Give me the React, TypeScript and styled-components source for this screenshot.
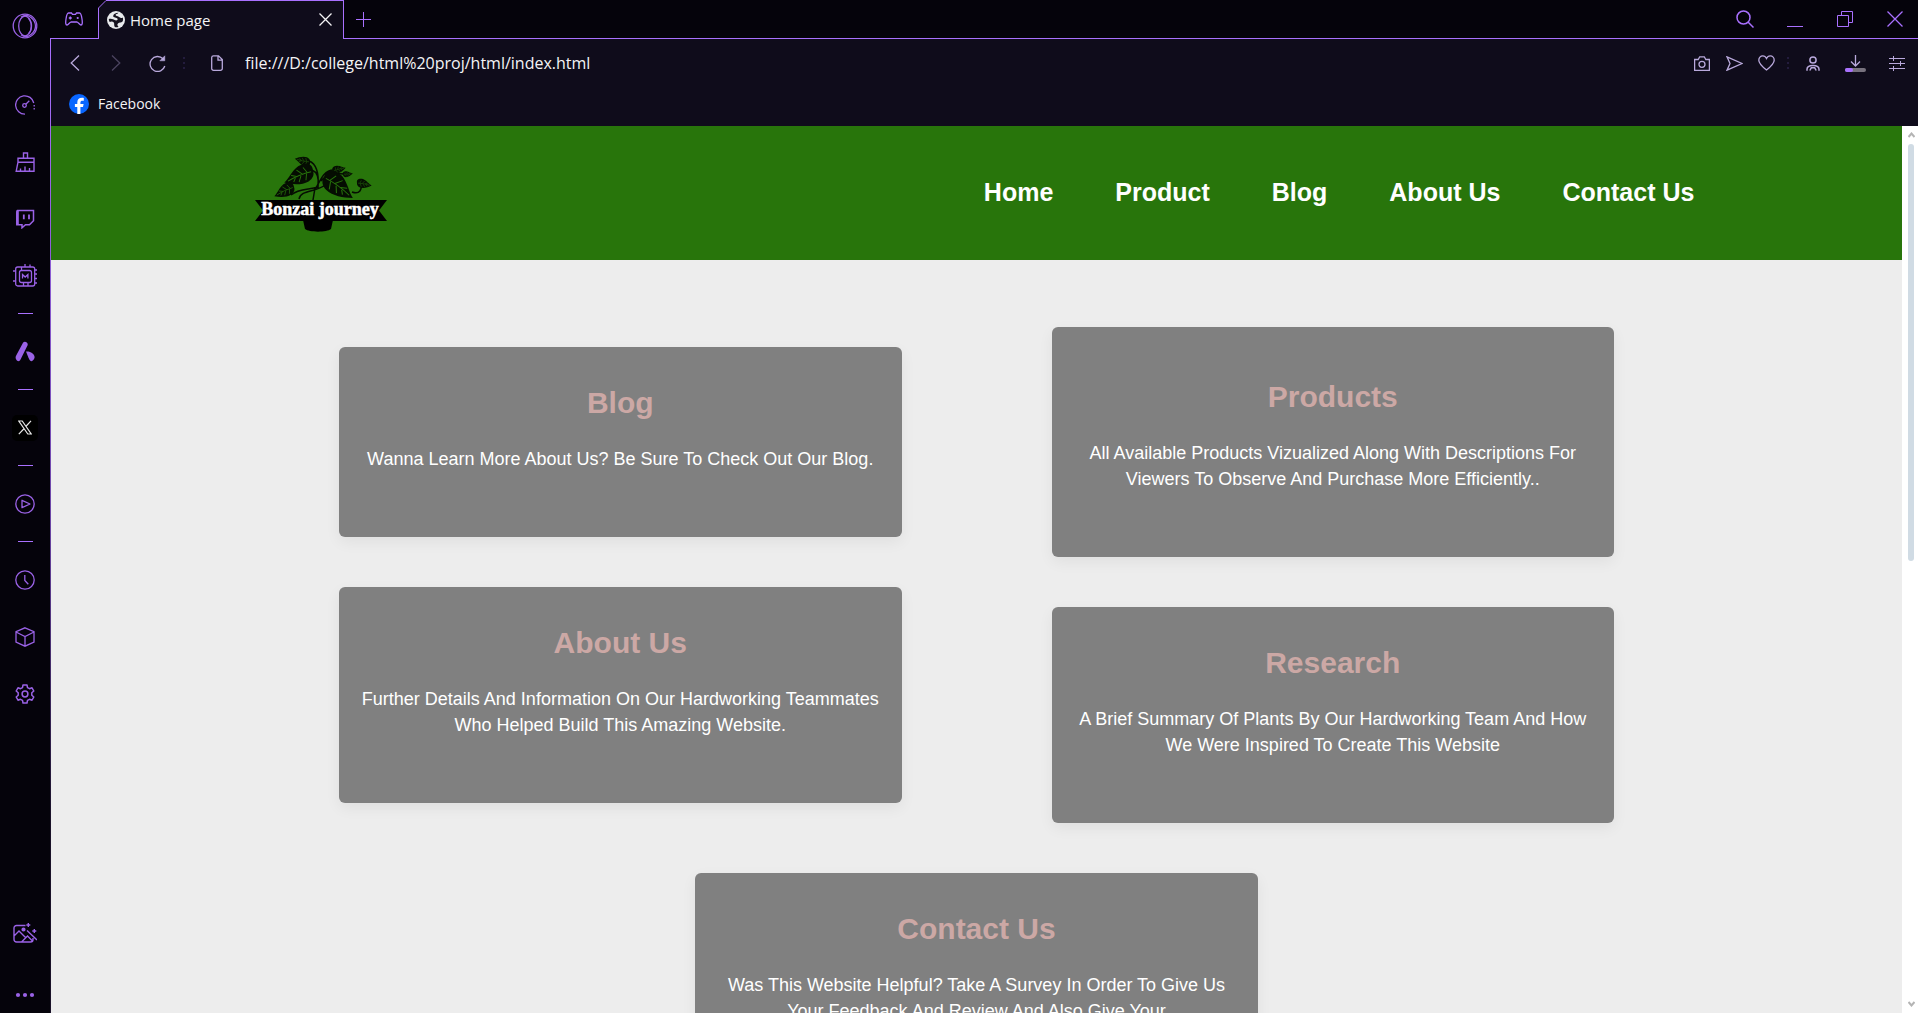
import React from "react";
import styled, { createGlobalStyle } from "styled-components";

const c = {
  frame: "#05030b",
  panel: "#0f0c1b",
  accent: "#a970ff",
  accentDim: "#9a62e6",
  tool: "#b9a9dc",
  green: "#28750b",
};
const uiFont = `"Open Sans", "Noto Sans", sans-serif`;
const pageFont = `"Liberation Sans", Arial, sans-serif`;

const Global = createGlobalStyle`
  *, *::before, *::after { box-sizing: border-box; }
  html, body { margin: 0; background: ${c.frame}; overflow: hidden; }
  button { border: 0; background: none; padding: 0; color: inherit; font: inherit; cursor: pointer; }
  svg { display: block; }
`;

const Shell = styled.div`
  display: flex;
  height: 100vh;
  background: ${c.frame};
  font-family: ${uiFont};
`;
const Sidebar = styled.nav`
  flex: none;
  width: 50px;
  display: flex;
  flex-direction: column;
  align-items: center;
  color: ${c.accentDim};
`;
const SideButton = styled.button<{ $h?: number }>`
  flex: none;
  width: 50px;
  height: ${(p) => p.$h ?? 57}px;
  display: grid;
  place-items: center;
`;
const SideGroup = styled.div`
  flex: 1;
  padding-top: 25px;
`;
const SideDivider = styled.div`
  height: 19px;
  display: grid;
  place-items: center;
  &::before {
    content: "";
    width: 15px;
    height: 1px;
    background: ${c.accent};
  }
`;
const XTile = styled.span`
  width: 26px;
  height: 26px;
  border-radius: 5px;
  display: grid;
  place-items: center;
  background: #000;
  color: #e8e8e8;
`;

const Main = styled.div`
  flex: 1;
  min-width: 0;
  display: flex;
  flex-direction: column;
`;
const TabStrip = styled.div`
  flex: none;
  display: flex;
  height: 39px;
  color: ${c.accent};
`;
const GameCorner = styled.div`
  width: 48px;
  display: grid;
  place-items: center;
  border-bottom: 1px solid ${c.accent};
`;
const Tab = styled.div`
  position: relative;
  width: 246px;
  display: flex;
  align-items: center;
  gap: 5px;
  padding: 0 8px 1px;
  background: ${c.panel};
  border: 1px solid ${c.accent};
  border-bottom: 0;
  color: #f4f4f6;
  font-size: 15px;
  line-height: 20px;
`;
const Chamfer = styled.svg`
  position: absolute;
  left: -1px;
  top: -1px;
`;
const TabTitle = styled.span`
  flex: 1;
`;
const TabClose = styled.button`
  width: 20px;
  height: 20px;
  display: grid;
  place-items: center;
`;
const StripRest = styled.div`
  flex: 1;
  display: flex;
  justify-content: space-between;
  border-bottom: 1px solid ${c.accent};
  margin-left: -1px;
`;
const WindowControls = styled.div`
  display: flex;
  gap: 4px;
`;
const StripButton = styled.button<{ $w?: number }>`
  width: ${(p) => p.$w ?? 46}px;
  display: grid;
  place-items: center;
`;

const Body = styled.div`
  flex: 1;
  min-height: 0;
  display: flex;
  flex-direction: column;
  border-left: 1px solid transparent;
  border-image: linear-gradient(${c.accent}, #6b45a5 50%, #1a1229 80%) 1;
  border-width: 0 0 0 1px;
`;
const Toolbar = styled.div`
  flex: none;
  height: 48px;
  display: flex;
  align-items: center;
  padding: 0 5px 0 3px;
  background: ${c.panel};
  color: ${c.tool};
`;
const ToolButton = styled.button<{ $w?: number; $dim?: boolean }>`
  flex: none;
  width: ${(p) => p.$w ?? 32}px;
  height: 32px;
  display: grid;
  place-items: center;
  opacity: ${(p) => (p.$dim ? 0.35 : 1)};
`;
const ToolGroup = styled.div<{ $gap?: number }>`
  display: flex;
  gap: ${(p) => p.$gap ?? 0}px;
`;
const Dots = styled.div`
  flex: none;
  display: grid;
  gap: 3px;
  margin: 0 8px 0 5px;
  & > i {
    width: 2px;
    height: 2px;
    background: #231c3d;
  }
`;
const Address = styled.input`
  flex: 1;
  min-width: 0;
  border: 0;
  outline: 0;
  background: none;
  padding: 0 0 0 4px;
  color: #f4f4f6;
  font: 16px/20px ${uiFont};
`;
const Bookmarks = styled.div`
  flex: none;
  height: 39px;
  padding: 7px 18px 0;
  background: ${c.panel};
`;
const Bookmark = styled.a`
  display: inline-flex;
  align-items: center;
  gap: 9px;
  color: #f4f4f6;
  font-size: 14px;
  line-height: 20px;
  text-decoration: none;
`;

const Viewport = styled.div`
  flex: 1;
  min-height: 0;
  display: flex;
`;
const Page = styled.div`
  flex: 1;
  min-width: 0;
  overflow: hidden;
  background: #ededed;
  font-family: ${pageFont};
`;
const Header = styled.header`
  height: 134px;
  padding: 0 11% 2px;
  display: flex;
  align-items: center;
  justify-content: space-between;
  background: ${c.green};
`;
const Links = styled.nav`
  display: flex;
  gap: 62px;
  padding-right: 4px;
`;
const NavLink = styled.a`
  color: #fff;
  font-size: 25px;
  line-height: 30px;
  font-weight: 700;
  text-decoration: none;
  white-space: nowrap;
`;
const Cards = styled.main`
  max-width: 1275px;
  margin: 0 auto;
  padding: 67px 0 50px;
  display: grid;
  grid-template-columns: 1fr 1fr;
  column-gap: 150px;
  row-gap: 50px;
  align-items: center;
`;
const Column = styled.div`
  display: grid;
  gap: 50px;
`;
const LastRow = styled.div`
  grid-column: 1 / -1;
  justify-self: center;
  width: calc(50% - 75px);
`;
const Card = styled.section<{ $tall?: boolean }>`
  padding: ${(p) => (p.$tall ? 52 : 38)}px 20px 65px;
  border-radius: 6px;
  background: #808080;
  box-shadow: 0 5px 15px rgba(0, 0, 0, 0.06);
  text-align: center;
`;
const CardTitle = styled.h2`
  margin: 0 0 25px;
  color: #cca8a5;
  font-size: 30px;
  line-height: 36px;
`;
const CardText = styled.p`
  margin: 0;
  color: #fff;
  font-size: 18px;
  line-height: 26px;
`;

const ScrollTrack = styled.div`
  flex: none;
  width: 16px;
  display: flex;
  flex-direction: column;
  align-items: center;
  background: #fff;
  color: #b4b4b4;
`;
const ScrollArrow = styled.button`
  width: 16px;
  height: 18px;
  display: grid;
  place-items: center;
  padding-left: 2px;
`;
const ScrollRail = styled.div`
  flex: 1;
  padding-left: 2px;
`;
const ScrollThumb = styled.div`
  width: 6px;
  height: 49%;
  border-radius: 3px;
  background: #d0dbe4;
`;

type IconProps = { w: number; h?: number; sw?: number; children: React.ReactNode };
const Icon = ({ w, h = w, sw = 1.3, children }: IconProps) => (
  <svg width={w} height={h} viewBox={`0 0 ${w} ${h}`} fill="none" stroke="currentColor" strokeWidth={sw} aria-hidden="true">
    {children}
  </svg>
);

const OperaIcon = () => (
  <Icon w={26}>
    <circle cx="13" cy="13" r="11.8" />
    <ellipse cx="13" cy="13" rx="6.3" ry="9.8" />
    <path d="M9 4.3C12 1.8 16 2 19 4.5c6 4.800 6 12.200 0 17-3 2.500-7 2.700-10 .2M16.500 5.500c4 3.500 4 11.500 0 15" />
  </Icon>
);
const GaugeIcon = () => (
  <Icon w={20}>
    <path d="M10 19.2A9.200 9.200 0 1 1 18.800 8" />
    <path d="M19.200 10v6" strokeDasharray="1.500 1.500" />
    <circle cx="9.500" cy="10.500" r="1.800" />
    <path d="m10.800 9.200 3.500-3.400" />
  </Icon>
);
const BroomIcon = () => (
  <Icon w={20} sw={1.4}>
    <path d="M8.500 6V1h4v5M3 6.200h16v4H3zM3 10.200 1.200 19.200H19v-9M5.500 19v-2.500M10 19v-4.500M14.500 19v-3" />
  </Icon>
);
const TwitchIcon = () => (
  <Icon w={20} sw={1.5}>
    <path d="M2.500 1.500h16v10.300l-4 4h-4L7 18.800v-3H1.800V4z" />
    <path d="M2.500 1.500v14" strokeWidth="2.600" />
    <path d="M8.800 5.500v4.700M14 5.500v4.700" strokeWidth="1.800" />
  </Icon>
);
const ChipIcon = () => (
  <Icon w={24} sw={1.3}>
    <rect x="2.700" y="3" width="19" height="19" rx="2" />
    <rect x="6.500" y="6.500" width="12" height="12" rx="2" />
    <path d="M9.500 14.500v-4l2.700 2.500 2.700-2.500v4M8.500 3v3M12 3V0M17 3V.5M21.700 6H24M21.700 10H24M21.700 14.500H24M21.700 19H24M2.700 7H0M2.700 17H0M10.500 18.500V22M15 18.500V22" />
  </Icon>
);
const AriaIcon = () => (
  <svg width="20" height="21" viewBox="0 0 20 21" fill="currentColor" aria-hidden="true">
    <path d="M8 1.800C9.200-.3 13.500 1 12.600 4.300L5.800 18c-1.300 2.900-3.400 2.600-4.600.6C.3 17 .5 15.800 1.200 14.500z" />
    <path d="M11 10.500c4.200-.6 8.400 2.200 8.600 5.600 0 1.500-1.300 3.900-3 4.100-1.400 0-2.200-1.500-3-3.200z" />
  </svg>
);
const XIcon = () => (
  <Icon w={14} h={15} sw={1.2}>
    <path d="M.8 1h3.400l9 13H9.800zM13 .8 7.800 6.500M6.200 8.500.8 14.200" />
  </Icon>
);
const PlayIcon = () => (
  <Icon w={20}>
    <circle cx="10" cy="10" r="9.200" />
    <path d="M7 6.300v7.400L15 10z" strokeLinejoin="round" />
  </Icon>
);
const ClockIcon = () => (
  <Icon w={20}>
    <circle cx="10" cy="10" r="9.200" />
    <path d="M9.800 5v5.500l3.500 3.800" />
  </Icon>
);
const CubeIcon = () => (
  <Icon w={20}>
    <path d="m10 .8 9 3.800v10.600L10 19.200 1 15.200V4.600zM1 5l9 4.500L19 5M10 9.500v9.700" />
  </Icon>
);
const GearIcon = () => (
  <Icon w={20} sw={1.5}>
    <path d="m8 1-.5 2.600-2 1.100L3 3.800 1.200 7l2 1.800v2.400l-2 1.800L3 16.200l2.500-.9 2 1.100L8 19h4l.5-2.600 2-1.100 2.500.9 1.800-3.200-2-1.800V8.800l2-1.800L17 3.800l-2.500.9-2-1.100L12 1z" strokeLinejoin="round" />
    <circle cx="10" cy="10" r="2.900" />
  </Icon>
);
const PictureIcon = () => (
  <Icon w={24} h={20} sw={1.4}>
    <path d="M12.500 2.500H3.500a2.500 2.500 0 0 0-2.500 2.500v11.500A2.500 2.500 0 0 0 3.500 19h14a2.500 2.500 0 0 0 2.500-2.500V15M1 13l5-5 6.500 6.500M8.500 19l6-6 5.500 5.500M14 7.500l10 9.500M15.300 0v4M13.300 2h4M21.300 6v4M19.300 8h4" />
    <circle cx="10.500" cy="6.500" r="1.400" fill="currentColor" />
  </Icon>
);
const MoreIcon = () => (
  <svg width="20" height="6" viewBox="0 0 20 6" fill="currentColor" aria-hidden="true">
    <circle cx="3" cy="3" r="2.100" />
    <circle cx="10" cy="3" r="2.100" />
    <circle cx="17" cy="3" r="2.100" />
  </svg>
);
const GamepadIcon = () => (
  <Icon w={18} h={14}>
    <path d="M3.500 1h3l1 1.300h3L11.500 1h3c1.500 0 2 2.500 2.500 6 .5 3.500.5 6-1 6-1.300 0-2.500-2.500-4-3H6c-1.500.5-2.700 3-4 3-1.500 0-1.500-2.500-1-6 .5-3.500 1-6 2.500-6z" />
    <path d="M5.300 4.500v3M3.800 6h3" />
    <circle cx="12.700" cy="6" r="1.100" fill="currentColor" stroke="none" />
  </Icon>
);
const GlobeIcon = () => (
  <svg width="18" height="18" viewBox="0 0 18 18" aria-hidden="true">
    <circle cx="9" cy="9" r="9" fill="#e8eaed" />
    <path d="M11.500 1.800C8.500 2 6.200 3.200 6.200 5c0 2 3.500 1.300 4.300 2.800.6 1.300-1 2-2.300 1.500C6.500 8.500 4.500 7 1.800 8c0 1.300.5 2.400 1 3 1.500-.9 3-.6 4 .6.900 1.200-.2 2.500 1 4.500 2 .4 2.700.1 3.700-.4-1-1.200-1.700-2.300-.5-3.300 1.500-1.200 4-.3 4.900-2.600.3-1 .3-2-.1-3.300-1.200.8-2.300.7-3.300-.2-1.500-1.500-3.700-1-3.900-2.300-.1-1 2.200-1 2.900-2.200z" fill="#16131f" />
  </svg>
);
const CloseIcon = ({ s }: { s: number }) => (
  <Icon w={s}>
    <path d={`M.5.5l${s - 1} ${s - 1}M${s - 0.5}.5L.5 ${s - 0.5}`} />
  </Icon>
);
const FacebookIcon = () => (
  <svg width="20" height="20" viewBox="0 0 20 20" aria-hidden="true">
    <circle cx="10" cy="10" r="10" fill="#0866ff" />
    <path d="M8.300 20v-6.900H5.900V10h2.400V8.600c0-3.400 1.500-4.900 4.800-4.900.6 0 1.300.1 1.700.2v2.800h-1.200c-1.600 0-2.200.6-2.200 2.200V10h3.200l-.6 3.100h-2.600V20z" fill="#fff" />
  </svg>
);

const Leaf = ({ x, y, r, s, flip }: { x: number; y: number; r: number; s: number; flip?: boolean }) => (
  <g transform={`translate(${x} ${y}) rotate(${r}) scale(${s} ${flip ? -s : s})`}>
    <path d="M0 0C-3-8 4-11 12-10 20-8 25-2 31 0 24 5 16 9 8 8 3 7 0 4 0 0z" fill="#050d02" />
    <path d="M2 0Q14-2 27 0M6-1 8-7M11-1l4-6M17-1l5-3M7 0l3 6M13 0l4 5M19 0l3 3" fill="none" stroke={c.green} strokeWidth="0.9" />
  </g>
);
const LogoText = styled.text`
  font: 700 18px "Liberation Serif", "Times New Roman", serif;
  fill: #fff;
  stroke: #fff;
  stroke-width: 0.5px;
`;
const Logo = () => (
  <svg width="132" height="80" viewBox="0 0 132 80" role="img" aria-label="Bonzai journey">
    <g fill="none" stroke="#050d02" strokeWidth="1.500">
      <path d="M63 36C64 24 62 12 54 9M57 18c5 2 7 8 6 16M60 38C66 26 70 17 80 18M66 29c8-9 16-8 24-7M60 36l-2 12M44 47c2-10 18-6 29-16M36 43c8-7 18-5 27-8M97 40c8 3 10-3 9-8" />
    </g>
    <Leaf x={55} y={10} r={192} s={0.5} />
    <Leaf x={58} y={19} r={158} s={1} flip />
    <Leaf x={39} y={35} r={155} s={0.7} flip />
    <Leaf x={69} y={25} r={36} s={1.15} />
    <Leaf x={78} y={19} r={-14} s={0.42} />
    <Leaf x={88} y={23} r={-8} s={0.32} />
    <Leaf x={102} y={31} r={10} s={0.48} />
    <path d="M0 48h132l-8 10.500 8 10.500H0l8-10.500zM48 68h30l-2 9c-4 3.500-22 3.500-26 0z" fill="#000" />
    <LogoText x="65" y="63" textAnchor="middle">Bonzai journey</LogoText>
  </svg>
);

type Item = { title: string; text: string; tall?: boolean };
const left: Item[] = [
  { title: "Blog", text: "Wanna Learn More About Us? Be Sure To Check Out Our Blog." },
  { title: "About Us", text: "Further Details And Information On Our Hardworking Teammates Who Helped Build This Amazing Website." },
];
const right: Item[] = [
  { title: "Products", text: "All Available Products Vizualized Along With Descriptions For Viewers To Observe And Purchase More Efficiently..", tall: true },
  { title: "Research", text: "A Brief Summary Of Plants By Our Hardworking Team And How We Were Inspired To Create This Website" },
];
const contact: Item = {
  title: "Contact Us",
  text: "Was This Website Helpful? Take A Survey In Order To Give Us Your Feedback And Review And Also Give Your",
};

const InfoCard = ({ title, text, tall }: Item) => (
  <Card $tall={tall}>
    <CardTitle>{title}</CardTitle>
    <CardText>{text}</CardText>
  </Card>
);

const ThreeDots = () => (
  <Dots>
    <i />
    <i />
    <i />
  </Dots>
);

export default function App() {
  return (
    <Shell>
      <Global />
      <Sidebar aria-label="Browser sidebar">
        <SideButton $h={51} aria-label="Menu"><OperaIcon /></SideButton>
        <SideGroup>
          <SideButton aria-label="GX Control"><GaugeIcon /></SideButton>
          <SideButton aria-label="Cleaner"><BroomIcon /></SideButton>
          <SideButton aria-label="Twitch"><TwitchIcon /></SideButton>
          <SideButton aria-label="Mods"><ChipIcon /></SideButton>
          <SideDivider />
          <SideButton aria-label="Aria"><AriaIcon /></SideButton>
          <SideDivider />
          <SideButton aria-label="X"><XTile><XIcon /></XTile></SideButton>
          <SideDivider />
          <SideButton aria-label="Player"><PlayIcon /></SideButton>
          <SideDivider />
          <SideButton aria-label="History"><ClockIcon /></SideButton>
          <SideButton aria-label="Extensions"><CubeIcon /></SideButton>
          <SideButton aria-label="Settings"><GearIcon /></SideButton>
        </SideGroup>
        <SideButton $h={88} aria-label="Wallpaper"><PictureIcon /></SideButton>
        <SideButton $h={36} aria-label="More"><MoreIcon /></SideButton>
      </Sidebar>
      <Main>
        <TabStrip>
          <GameCorner><GamepadIcon /></GameCorner>
          <Tab>
            <Chamfer width="9" height="9" viewBox="0 0 9 9">
              <path d="M0 0h9L0 9z" fill={c.frame} />
              <path d="M.5 9V8L8 .5h1" fill="none" stroke={c.accent} />
            </Chamfer>
            <GlobeIcon />
            <TabTitle>Home page</TabTitle>
            <TabClose aria-label="Close tab"><CloseIcon s={13} /></TabClose>
          </Tab>
          <StripRest>
            <StripButton $w={40} aria-label="New tab">
              <Icon w={15} sw={1}><path d="M7.500 0v15M0 7.500h15" /></Icon>
            </StripButton>
            <WindowControls>
              <StripButton aria-label="Search">
                <Icon w={18} sw={1.5}><circle cx="7.500" cy="7.500" r="6.500" /><path d="m12 12 5.500 5.500" /></Icon>
              </StripButton>
              <StripButton aria-label="Minimise">
                <Icon w={16} sw={1}><path d="M0 15.500h16" /></Icon>
              </StripButton>
              <StripButton aria-label="Restore">
                <Icon w={16} sw={1}><path d="M.5 4.500h11v11H.5zM4.500 4.500v-4h11v11h-4" /></Icon>
              </StripButton>
              <StripButton aria-label="Close"><CloseIcon s={16} /></StripButton>
            </WindowControls>
          </StripRest>
        </TabStrip>
        <Body>
          <Toolbar>
            <ToolButton $w={41} aria-label="Back"><Icon w={10} h={16}><path d="M9 .5 1.200 8 9 15.500" /></Icon></ToolButton>
            <ToolButton $w={41} $dim aria-label="Forward"><Icon w={10} h={16}><path d="M1 .5 8.800 8 1 15.500" /></Icon></ToolButton>
            <ToolButton $w={42} aria-label="Reload">
              <Icon w={17}><path d="M14 3.800A7.500 7.500 0 1 0 15.800 11" /><path d="M15.800.8v5h-5z" fill="currentColor" strokeWidth=".5" /></Icon>
            </ToolButton>
            <ThreeDots />
            <ToolButton $w={48} aria-label="Page information">
              <Icon w={12} h={16}><path d="M2.500.8h5L11.300 4.600v8.900a1.800 1.800 0 0 1-1.800 1.800h-7A1.800 1.800 0 0 1 .7 13.500v-11A1.800 1.800 0 0 1 2.500.8zM7 1v4.200h4.200" /></Icon>
            </ToolButton>
            <Address aria-label="Address" defaultValue="file:///D:/college/html%20proj/html/index.html" />
            <ToolGroup>
              <ToolButton aria-label="Snapshot">
                <Icon w={16} h={15}><path d="M.6 3.500h3.600l1.500-2.700h4.600l1.500 2.700h3.600v10.800H.6z" /><circle cx="8" cy="8.300" r="3" /></Icon>
              </ToolButton>
              <ToolButton aria-label="Send to My Flow">
                <Icon w={17} h={15}><path d="M1 .8 16 7.500 1 14.200 4 7.500z" /></Icon>
              </ToolButton>
              <ToolButton aria-label="Add to bookmarks">
                <Icon w={17} h={16}><path d="M8.500 15C3.500 11 .8 8.500.8 5.200.8 2.700 2.500.8 4.800.8c2 0 3 1.200 3.700 2.700C9.200 2 10.200.8 12.200.8c2.300 0 4 1.900 4 4.400 0 3.300-2.700 5.800-7.700 9.800z" /></Icon>
              </ToolButton>
            </ToolGroup>
            <ThreeDots />
            <ToolGroup $gap={10}>
              <ToolButton aria-label="Profile">
                <Icon w={14} h={15} sw={1.5}><circle cx="7" cy="4" r="3.100" /><path d="M1 14.800v-1.500C1 10.800 3.500 9.500 7 9.500s6 1.300 6 3.800v1.500M3.800 14.500l1.500-2.700h3.400l1.500 2.700" /></Icon>
              </ToolButton>
              <ToolButton aria-label="Downloads">
                <Icon w={21} h={17}>
                  <path d="M10.500 0v10.500M6 6.500l4.500 4.500L15 6.500" />
                  <path d="M2 15h17" stroke="#77727e" strokeWidth="4" strokeLinecap="round" />
                  <path d="M2 15h4" stroke={c.accent} strokeWidth="4" strokeLinecap="round" />
                </Icon>
              </ToolButton>
              <ToolButton aria-label="Easy setup">
                <Icon w={16} h={15} sw={1}><path d="M0 2.500h16M0 7.500h16M0 12.500h16M4.500 0v5M11.500 5v5M4.500 10v5" /></Icon>
              </ToolButton>
            </ToolGroup>
          </Toolbar>
          <Bookmarks>
            <Bookmark href="#facebook"><FacebookIcon />Facebook</Bookmark>
          </Bookmarks>
          <Viewport>
            <Page>
              <Header>
                <Logo />
                <Links>
                  {["Home", "Product", "Blog", "About Us", "Contact Us"].map((n) => (
                    <NavLink key={n} href="#">{n}</NavLink>
                  ))}
                </Links>
              </Header>
              <Cards>
                <Column>{left.map((i) => <InfoCard key={i.title} {...i} />)}</Column>
                <Column>{right.map((i) => <InfoCard key={i.title} {...i} />)}</Column>
                <LastRow><InfoCard {...contact} /></LastRow>
              </Cards>
            </Page>
            <ScrollTrack>
              <ScrollArrow aria-label="Scroll up"><Icon w={7} h={6} sw={2}><path d="m.5 5 3-3.500 3 3.500" /></Icon></ScrollArrow>
              <ScrollRail><ScrollThumb /></ScrollRail>
              <ScrollArrow aria-label="Scroll down"><Icon w={7} h={6} sw={2}><path d="m.5 1 3 3.500 3-3.500" /></Icon></ScrollArrow>
            </ScrollTrack>
          </Viewport>
        </Body>
      </Main>
    </Shell>
  );
}
